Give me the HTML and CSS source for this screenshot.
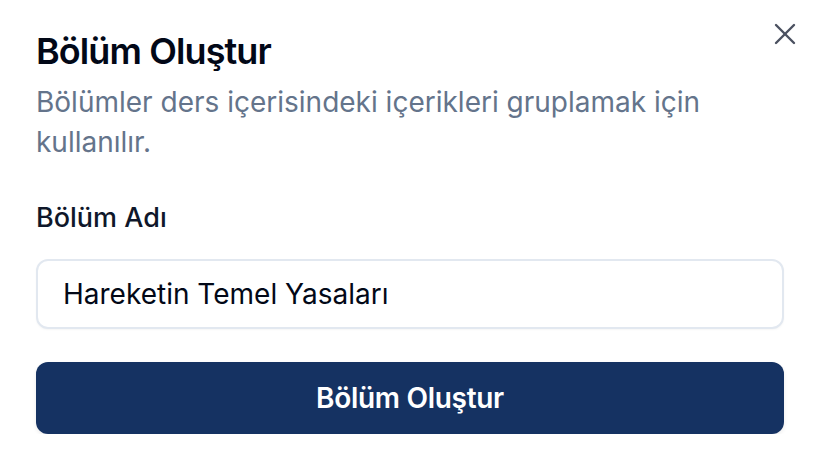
FILE: index.html
```html
<!DOCTYPE html>
<html>
<head>
    <title>Bölüm Oluştur</title>
    <link rel="stylesheet" href="styles.css">
</head>
<body>
    <!-- Dialog -->
    <div class="dialog">
        <button class="close" aria-label="Kapat">
            <svg width="26" height="26" viewBox="0 0 26 26" fill="none" stroke="currentColor" stroke-width="2.4" stroke-linecap="round" stroke-linejoin="round">
                <path d="M22 4 4 22"></path>
                <path d="m4 4 18 18"></path>
            </svg>
        </button>

        <header class="dialog-header">
            <h2 class="title">Bölüm Oluştur</h2>
            <p class="description">Bölümler ders içerisindeki içerikleri gruplamak için kullanılır.</p>
        </header>

        <form class="form">
            <label class="label" for="name">Bölüm Adı</label>
            <input class="input" id="name" type="text" value="Hareketin Temel Yasaları">
            <button class="submit" type="button">Bölüm Oluştur</button>
        </form>
    </div>
</body>
</html>
```

FILE: styles.css
```css
body {
    margin: 0;
    font-family: Inter, "Noto Sans", sans-serif;
    background-color: #ffffff;
    color: #020817;
}

.dialog {
    position: relative;
    width: 748px;
    padding: 29px 40px 0 36px;
}

/* Close button in the corner */
.close {
    position: absolute;
    top: 21px;
    right: 26px;
    width: 26px;
    height: 26px;
    padding: 0;
    border: none;
    background: none;
    color: #4b5160;
    display: flex;
}

.title {
    margin: 0;
    font-size: 36px;
    line-height: 44px;
    font-weight: 600;
    letter-spacing: -0.9px;
    color: #020817;
}

.description {
    margin: 9px 0 0;
    font-size: 28px;
    line-height: 40px;
    color: #64748b;
}

.form {
    display: flex;
    flex-direction: column;
}

.label {
    margin-top: 40px;
    font-size: 27px;
    line-height: 32px;
    font-weight: 500;
    color: #0f172a;
}

.input {
    margin-top: 25px;
    height: 70px;
    box-sizing: border-box;
    padding: 0 25px;
    border: 2px solid #e2e8f0;
    border-radius: 12px;
    font-family: inherit;
    font-size: 28px;
    color: #020817;
    background: #ffffff;
    box-shadow: 0 1px 2px rgba(0, 0, 0, 0.04);
}

.submit {
    margin-top: 33px;
    height: 72px;
    border: none;
    border-radius: 12px;
    background-color: #153262;
    color: #ffffff;
    font-family: inherit;
    font-size: 28px;
    font-weight: 600;
    letter-spacing: -0.3px;
    box-shadow: 0 2px 4px rgba(0, 0, 0, 0.08);
}
```
